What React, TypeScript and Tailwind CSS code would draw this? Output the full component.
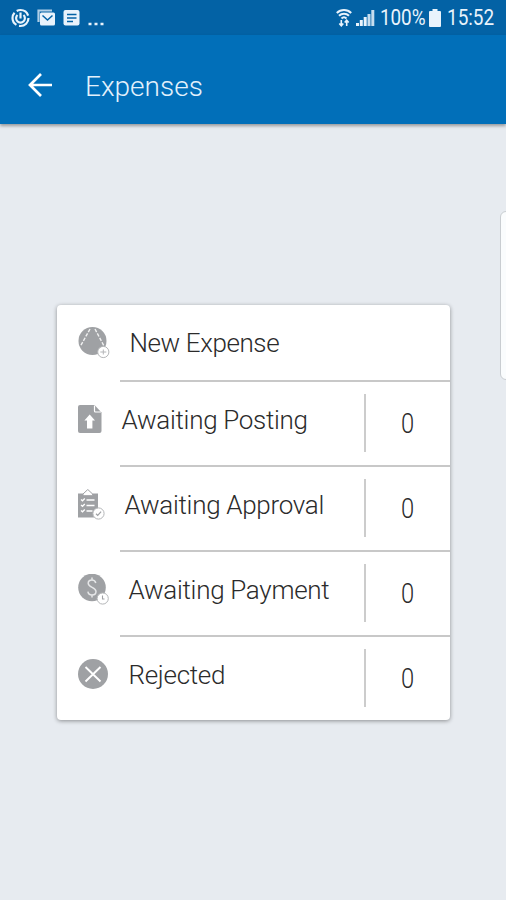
import React from "react";

interface ExpenseRow {
  label: string;
  labelClass: string;
  icon: React.ReactNode;
  count?: number;
}

const GREY = "#9fa1a4";
const LIGHT_GREY = "#b4b6b8";

const NewExpenseIcon = () => (
  <svg width="32" height="32" viewBox="0 0 32 32" fill="none">
    <circle cx="14.5" cy="14" r="14" fill={GREY} />
    <path d="M12 2L2.5 19M17 2l9 17" stroke="#fff" strokeWidth="1.4" strokeDasharray="3.5 1.5" opacity=".85" />
    <circle cx="25.3" cy="25" r="5.6" fill="#fff" stroke={LIGHT_GREY} />
    <path d="M22.3 25h6M25.3 22.500v5" stroke={LIGHT_GREY} />
  </svg>
);

const PostingIcon = () => (
  <svg width="32" height="32" viewBox="0 0 32 32" fill="none">
    <path d="M2 1h14.5l7 7.5V27a2 2 0 0 1-2 2H2a2 2 0 0 1-2-2V3a2 2 0 0 1 2-2z" fill={GREY} />
    <path d="M16.5 1.5V7a1 1 0 0 0 1 1H23" stroke="#fff" strokeWidth="1.2" />
    <path d="M11.7 10.5l5.3 6h-2.6v8H9v-8H6.400z" fill="#fff" />
  </svg>
);

const ApprovalIcon = () => (
  <svg width="32" height="32" viewBox="0 0 32 32" fill="none">
    <path d="M0 4.500h20v24H0z" fill={GREY} />
    <path d="M5 5L9.800.500 14.600 5v1.700H5z" fill="#fff" stroke={GREY} />
    <path d="M8.500 11h8M8.500 16.500h8M8.500 22h6" stroke="#fff" strokeWidth="1.5" />
    <path d="M3 10.500l1.500 1.300 2.300-2.300M3 16l1.500 1.300L6.800 15M3 21.500l1.500 1.300 2.300-2.300" stroke="#fff" strokeWidth="1.3" />
    <circle cx="20.5" cy="24.5" r="5.6" fill="#fff" stroke={LIGHT_GREY} />
    <path d="M18 24.800l1.700 1.600 3.400-3.800" stroke={GREY} strokeWidth="1.2" />
  </svg>
);

const PaymentIcon = () => (
  <svg width="32" height="32" viewBox="0 0 32 32" fill="none">
    <circle cx="14" cy="13.500" r="13.8" fill={GREY} />
    <path
      d="M17.800 9c-.5-2-1.800-3-3.800-3-2.300 0-3.800 1.200-3.800 3.300 0 4.700 7.800 3.500 7.800 8.200 0 2.200-1.600 3.500-4 3.500s-3.800-1.200-4.100-3.400M14 3.500V6M14 21v2.500"
      stroke="#e6e7e8"
      strokeWidth="1.5"
    />
    <circle cx="24.7" cy="24.5" r="5.6" fill="#fff" stroke={LIGHT_GREY} />
    <path d="M24.5 21.500V25h2" stroke={GREY} strokeWidth="1.1" />
  </svg>
);

const RejectedIcon = () => (
  <svg width="32" height="32" viewBox="0 0 32 32" fill="none">
    <circle cx="15" cy="15" r="15" fill={GREY} />
    <path d="M7.5 8l15 14.5M22.5 8l-15 14.5" stroke="#fff" strokeWidth="1.9" />
  </svg>
);

const rows: ExpenseRow[] = [
  { label: "New Expense", labelClass: "pl-[10px] tracking-[-0.4px]", icon: <NewExpenseIcon /> },
  { label: "Awaiting Posting", labelClass: "pl-[2px] tracking-[-0.3px]", icon: <PostingIcon />, count: 0 },
  { label: "Awaiting Approval", labelClass: "pl-[5px] tracking-[-0.3px]", icon: <ApprovalIcon />, count: 0 },
  { label: "Awaiting Payment", labelClass: "pl-[9px] tracking-[-0.3px]", icon: <PaymentIcon />, count: 0 },
  { label: "Rejected", labelClass: "pl-[9px] tracking-[-0.3px]", icon: <RejectedIcon />, count: 0 },
];

const StatusBar = () => (
  <div className="flex h-[35px] items-center bg-[#0362a5] pl-[11px] pr-3 text-[#e9f3fc]">
    <svg width="94" height="22" viewBox="0 0 94 22" fill="none">
      <circle cx="9.5" cy="11" r="8" stroke="currentColor" strokeWidth="2.2" strokeDasharray="14 2.75" />
      <path d="M6.5 8a4.4 4.4 0 1 0 6 0M9.5 5.5v6" stroke="currentColor" strokeWidth="2.2" />
      <path d="M27.5 15V3.5H41" stroke="currentColor" strokeWidth="2.2" opacity=".75" />
      <rect x="29" y="5.5" width="15" height="13" rx="1.5" fill="currentColor" />
      <path d="M31.5 8.5l5 4.5 5-4.5" stroke="#0362a5" strokeWidth="1.5" />
      <rect x="52.5" y="3" width="16" height="15.5" rx="2" fill="currentColor" />
      <path d="M56 7.5h9.5M56 11h9.5M56 14.5h6" stroke="#0362a5" strokeWidth="1.5" />
      <path d="M77.5 17h3M83.5 17h3M89.5 17h3" stroke="currentColor" strokeWidth="2.7" />
    </svg>
    <div className="ml-auto flex items-center">
      <svg width="39" height="22" viewBox="0 0 39 22" fill="none">
        <path
          d="M.8 6c4-4 10.400-4 14.400 0M3 8.800c2.800-2.800 7.200-2.800 10 0M5.500 11.500c1.500-1.500 3.500-1.500 5 0"
          stroke="currentColor"
          strokeWidth="2"
        />
        <path d="M5.300 13v6M3.300 16.500l2 2.300 2-2.300M10.700 19v-6M8.700 15.500l2-2.300 2 2.300" stroke="currentColor" strokeWidth="1.6" />
        <path d="M21.500 19v-3M25.300 19v-6M29.200 19v-9" stroke="currentColor" strokeWidth="3" />
        <path d="M33 19V7M36.800 19V3" stroke="currentColor" strokeWidth="3" opacity=".85" />
      </svg>
      <span className="ml-[5px] mt-px w-[46px] origin-left scale-x-[.88] whitespace-nowrap text-[21.5px] leading-none tracking-[-0.1px]">
        100%
      </span>
      <svg className="ml-[3px]" width="12" height="18" viewBox="0 0 12 18" fill="currentColor">
        <path d="M3.500 0h5v2H11a1 1 0 0 1 1 1v14a1 1 0 0 1-1 1H1a1 1 0 0 1-1-1V3a1 1 0 0 1 1-1h2.500z" />
      </svg>
      <span className="ml-[6px] mt-px w-[47px] origin-left scale-x-[.88] whitespace-nowrap text-[21.5px] leading-none">15:52</span>
    </div>
  </div>
);

const Row = ({ row }: { row: ExpenseRow }) => (
  <div className={`group flex last:h-[83px] ${row.count === undefined ? "h-[77px]" : "h-[85px]"}`}>
    <div className="w-[63px] shrink-0 pl-[21px] pt-[22px]">{row.icon}</div>
    <div className="flex flex-1 border-b-2 border-[#c8c8c8] group-last:border-b-0">
      <div className={`flex-1 whitespace-nowrap pt-[22px] text-[26px] leading-8 ${row.labelClass}`}>
        {row.label}
      </div>
      {row.count !== undefined && (
        <div className="mt-3 flex h-[58px] w-[86px] justify-center border-l-2 border-[#ccc] text-[27px] leading-[61px]">
          <span className="scale-x-[.88]">{row.count}</span>
        </div>
      )}
    </div>
  </div>
);

export default function App() {
  return (
    <div className="relative flex h-[900px] w-[506px] flex-col overflow-hidden bg-[#e7ebf0] font-['Roboto','Noto_Sans',sans-serif]">
      <StatusBar />
      <header className="flex h-[89px] shrink-0 items-center bg-[#016fb9] pl-[28px] pt-[14px] text-white shadow-[0_2px_3px_rgba(0,0,0,0.35)]">
        <svg className="-mt-1" width="24" height="24" viewBox="0 0 24 24" fill="none">
          <path d="M24 12H2M13 1L2 12l11 11" stroke="currentColor" strokeWidth="2.7" />
        </svg>
        <h1 className="ml-[33px] text-[28px] font-light leading-8 text-[#e3f1fc]">Expenses</h1>
      </header>
      <main className="mx-auto mt-[181px] w-[393px] rounded bg-white font-light text-[#2b2b2b] shadow-[0_1px_4px_rgba(0,0,0,0.4)]">
        {rows.map((row) => (
          <Row key={row.label} row={row} />
        ))}
      </main>
      {/* edge panel handle, partly off screen */}
      <div className="absolute -right-2 top-[211px] h-[169px] w-[14px] rounded-md border border-[#c9cdd1] bg-[#fafcfd]" />
    </div>
  );
}
